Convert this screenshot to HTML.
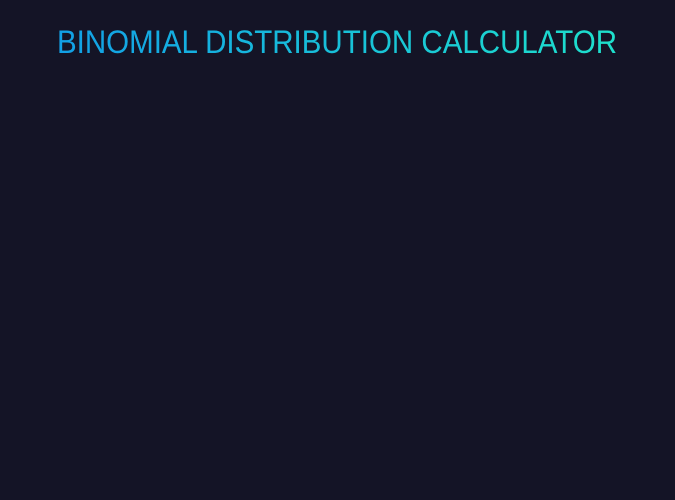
<!DOCTYPE html>
<html><head><meta charset="utf-8"><style>
html,body{margin:0;padding:0;width:675px;height:500px;background:#141426;overflow:hidden}
</style></head><body>
<svg width="675" height="500" xmlns="http://www.w3.org/2000/svg" style="display:block">
<defs><linearGradient id="g" x1="57" y1="0" x2="617" y2="0" gradientUnits="userSpaceOnUse">
<stop offset="0" stop-color="#12a0e6"/><stop offset="1" stop-color="#1ee0cc"/></linearGradient></defs>
<rect width="675" height="500" fill="#141426"/>
<text x="57" y="53" font-family="Liberation Sans, sans-serif" font-size="32" fill="url(#g)" textLength="560" lengthAdjust="spacingAndGlyphs">BINOMIAL DISTRIBUTION CALCULATOR</text>
</svg>
</body></html>
